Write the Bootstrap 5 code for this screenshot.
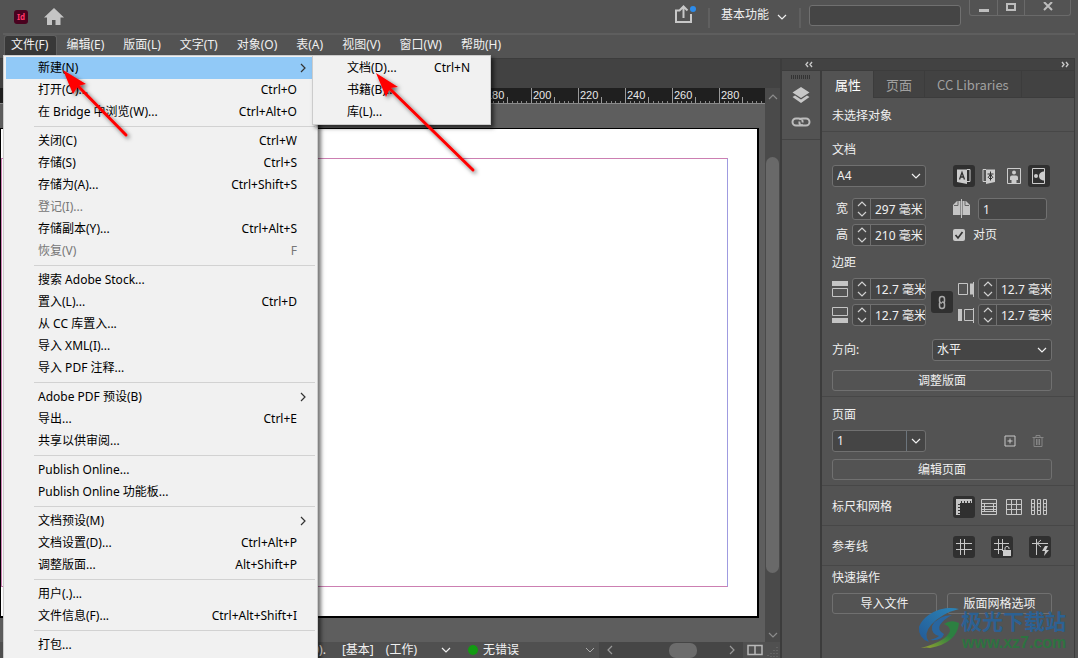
<!DOCTYPE html>
<html lang="zh-CN">
<head>
<meta charset="utf-8">
<meta name="viewport" content="width=device-width, initial-scale=1">
<title>InDesign</title>
<link href="https://cdn.jsdelivr.net/npm/bootstrap@5.3.0/dist/css/bootstrap.min.css" rel="stylesheet">
<style>
:root{--base:#535353;--deep:#424242;--line:#3c3c3c;--field:#454545;--edge:#707070;--txt:#f0f0f0}
body{font:12px/16px "Noto Sans","Noto Sans CJK SC",sans-serif;background:var(--base);color:var(--txt);height:100vh;overflow:hidden}
svg{display:block;flex:none}
button,input,select{font:inherit;color:inherit}
button{background:none;border:0;padding:0}
.title-bar{height:33px;padding-left:14px;padding-right:7px}
.id-logo{width:14px;height:14px;border-radius:3px;background:#49021f;color:#ff3366;font:bold 8px/14px "Noto Sans",sans-serif;text-align:center}
.v-sep{width:2px;height:20px;background:#606060}
.share-btn{margin-right:11px}
.space-btn{margin:3px 12px 0 3px}
.search-box{width:152px;height:21px;margin-top:1px;background:var(--field);border:1px solid var(--edge);border-radius:3px}
.win-ctl{height:16px;border:1px solid #6a6a6a;border-top:0;border-radius:0 0 3px 3px}
.win-ctl button{width:27px;height:15px;color:#bdbdbd}
.win-ctl button+button{border-left:1px solid #6a6a6a}
.win-ctl button:last-child{width:46px}
.menu-bar{height:25px;border-top:2px solid #5e5e5e;margin:0 3px;padding-left:1px}
.menu-bar .nav-link{color:var(--txt);padding:2px 8px;height:20px;line-height:16px;margin-right:3px}
.menu-bar .nav-link.open{background:#383838;border:1px solid #606060;border-bottom:0;border-radius:3px 3px 0 0;padding:1px 8px 2px 6px;margin-right:1px}
.app-menu{position:absolute;background:#f1f1f1;border:1px solid #ccc;border-radius:0;padding:2px;font-size:12px;color:#000;box-shadow:3px 3px 4px rgba(0,0,0,.55);margin:0;min-width:0}
.file-menu{top:20px;left:-1px;width:315px;padding-top:1px}
.new-menu{top:-2px;left:306px;width:179px;padding:1px 2px}
.app-menu .dropdown-item{display:flex;justify-content:space-between;align-items:center;height:22px;padding:0 18px 0 32px;color:#000;line-height:20px}
.file-menu>li>.dropdown-item{margin-right:3px;width:auto;padding-right:15px}
.app-menu .dropdown-item.disabled{color:#777}
.app-menu .dropdown-item.hot{background:#91c9f7}
.app-menu .dropdown-item svg{margin-right:-9px;color:#333}
.file-menu .dropdown-divider{height:1px;border-top:1px solid #d2d2d2;margin:3px 0 3px 28px;opacity:1}
.work{margin-right:3px;min-height:0}
.doc-tabs{height:30px;background:var(--deep);border-top:1px solid var(--line)}
.ruler{height:16px;background:#1f1f1f;border-bottom:1px solid #8a8a8a;overflow:hidden;color:#e8e8e8}
.r-cell{width:47px;height:15px;flex:none;position:relative;font:11px/15px "Liberation Sans",sans-serif;padding-left:2px}
.r-cell:last-child{width:46px;overflow:hidden}
.r-cell svg{position:absolute;left:0;bottom:0}
.canvas{background:#5e5e5e;padding:24px 6px 24px 0;min-height:0}
.artboard{background:#fff;border:1px solid #000;border-right-width:2px;border-bottom-width:2px;padding:29px 29px 29px 0}
.margins{border:1px solid #cc7fb2;border-right-color:#9f9be0}
.v-scroll{width:15px;background:#4a4a4a;padding:6px 0 4px;color:#8c8c8c}
.v-scroll .thumb{width:13px;border-radius:7px;background:#696969;margin:57px 0 59px}
.status{height:16px;background:#505050}
.h-scroll{width:144px;background:#464646;color:#999}
.h-scroll .thumb{width:28px;height:15px;border-radius:7px;background:#6c6c6c}
.side{width:295px;border-left:2px solid var(--line);border-right:1px solid var(--line)}
.side-head{height:13px;padding:0 2px 0 22px;background:var(--deep);border-top:1px solid var(--line);border-bottom:1px solid var(--line)}
.dock{width:40px;border-right:2px solid var(--line)}
.tool-rail{border-bottom:1px solid #444;height:69px;padding-top:4px}
.link-btn{margin-top:13px}
.prop-tabs{height:27px;background:var(--deep);border-bottom:1px solid var(--line)}
.prop-tabs button{height:27px;padding:0 12px;font:13px/26px "Noto Sans CJK SC",sans-serif;color:#a0a0a0;border-right:1px solid var(--line)}
.prop-tabs button.on{background:var(--base);color:#fff;padding-left:13px}
.sect{border-bottom:1px solid #474747;padding:10px 22px 5px 10px}
.sect.tools{padding-bottom:7px}
.sect.quick{padding-top:4px;border:0}
.sect-label{margin-bottom:7px}
.fld{background:var(--field);border:1px solid var(--edge);border-radius:3px;height:22px;overflow:hidden;display:flex;align-items:center}
.fld select,.fld input{background:transparent;border:0;outline:0;padding:0 4px;min-width:0;width:100%;height:20px;appearance:none;border-radius:0}
.fld .unit{padding-right:0}
.fld.pages{width:69px}
.fld.dir{width:120px}
.spin button{width:18px;height:20px;border-right:1px solid var(--edge);flex:none}
.spin{width:74px}
.row-l{width:94px}
.size-rows{gap:27px;margin:11px 0 9px}
.dir-row{margin:13px 0 9px}
.facing{height:22px}
.page-row{margin-bottom:7px}
.out{border:1px solid var(--edge);border-radius:3px;height:21px;line-height:19px}
.pair{gap:10px}
.ib-set{margin-right:2px;gap:3px}
.ib-set.wide{gap:16px;margin-right:1px}
.ib{width:22px;height:22px;border-radius:3px;display:grid;place-items:center;color:#c8c8c8}
.ib.on{background:#303030}
.chk{appearance:none;width:12px;height:12px;border-radius:2px;margin:0;background:#c8c8c8 url("data:image/svg+xml,%3Csvg xmlns='http://www.w3.org/2000/svg' viewBox='0 0 12 12'%3E%3Cpath d='M2.5 6l2.500 3 4.500-6' fill='none' stroke='%23333' stroke-width='1.700'/%3E%3C/svg%3E")}
.over{position:absolute;pointer-events:none;z-index:2000}
.mark-logo{right:8px;bottom:3px;width:152px;height:50px}
.wm-a{font:bold 21px "Noto Sans CJK SC",sans-serif;fill:#2c6193}
.wm-b{font:bold 16px "Liberation Sans",sans-serif;fill:#2d7340}
</style>
</head>
<body class="d-flex flex-column">
<svg width="0" height="0" class="position-absolute">
<symbol id="dn" viewBox="0 0 10 6"><path d="M1 1l4 4 4-4" fill="none" stroke="currentColor" stroke-width="1.200"/></symbol>
<symbol id="up" viewBox="0 0 10 6"><path d="M1 5l4-4 4 4" fill="none" stroke="currentColor" stroke-width="1.200"/></symbol>
<symbol id="rt" viewBox="0 0 6 10"><path d="M1 1l4 4-4 4" fill="none" stroke="currentColor" stroke-width="1.200"/></symbol>
<symbol id="lf" viewBox="0 0 6 10"><path d="M5 1L1 5l4 4" fill="none" stroke="currentColor" stroke-width="1.200"/></symbol>
<symbol id="ud" viewBox="0 0 10 16"><path d="M1 5l4-4 4 4M1 11l4 4 4-4" fill="none" stroke="#d0d0d0" stroke-width="1.200"/></symbol>
<symbol id="ticks" viewBox="0 0 47 15"><path d="M.5 0v15M23.500 9v6" stroke="#999"/><path d="M5.500 13v2M9.500 13v2M14.500 13v2M19.500 13v2M28.500 13v2M33.500 13v2M37.500 13v2M42.500 13v2" stroke="#888"/></symbol>
</svg>

<header class="title-bar d-flex align-items-start flex-shrink-0">
  <div class="d-flex align-items-center gap-3 h-100">
    <div class="id-logo">Id</div>
    <svg width="20" height="17" viewBox="0 0 20 17"><path fill="#c4c4c4" d="M10 0L0 9.500h3V17h5v-5h3.500v5h5V9.500H20z"/></svg>
  </div>
  <div class="d-flex align-items-start ms-auto pt-1">
    <button aria-label="共享" class="share-btn"><svg width="23" height="20" viewBox="0 0 23 20"><path d="M6 6.500H2V18h15V10M9.500 14V4M5.500 6.500l4-4 4 4" fill="none" stroke="#c8c8c8" stroke-width="2"/><circle cx="19" cy="5" r="3" fill="#2d8ceb"/></svg></button>
    <div class="v-sep mt-1 me-2"></div>
    <button class="space-btn d-flex align-items-center gap-2"><span>基本功能</span><svg class="mt-1" width="10" height="6"><use href="#dn"/></svg></button>
    <div class="v-sep mt-1 me-2"></div>
    <input class="search-box me-2" aria-label="搜索">
  </div>
  <div class="win-ctl d-flex">
    <button aria-label="最小化"><svg class="mx-auto" width="12" height="12"><path d="M1 8.500h10" stroke="currentColor" stroke-width="3"/></svg></button>
    <button aria-label="最大化"><svg class="mx-auto" width="12" height="12"><path d="M2 2h8v6H2z" fill="none" stroke="currentColor" stroke-width="2"/></svg></button>
    <button aria-label="关闭"><svg class="mx-auto" width="12" height="12"><path d="M2 0l8 8M10 0l-8 8" stroke="currentColor" stroke-width="2"/></svg></button>
  </div>
</header>

<nav class="menu-bar flex-shrink-0">
  <ul class="nav flex-nowrap">
    <li class="nav-item position-relative"><a class="nav-link open" href="#">文件(F)</a>
      <ul class="app-menu file-menu dropdown-menu show">
        <li class="position-relative"><a class="dropdown-item hot" href="#">新建(N)<svg width="6" height="10"><use href="#rt"/></svg></a>
          <ul class="app-menu new-menu dropdown-menu show">
            <li><a class="dropdown-item" href="#">文档(D)...<span>Ctrl+N</span></a></li>
            <li><a class="dropdown-item" href="#">书籍(B)...</a></li>
            <li><a class="dropdown-item" href="#">库(L)...</a></li>
          </ul></li>
        <li><a class="dropdown-item" href="#">打开(O)...<span>Ctrl+O</span></a></li>
        <li><a class="dropdown-item" href="#">在 Bridge 中浏览(W)...<span>Ctrl+Alt+O</span></a></li>
        <li><hr class="dropdown-divider"></li>
        <li><a class="dropdown-item" href="#">关闭(C)<span>Ctrl+W</span></a></li>
        <li><a class="dropdown-item" href="#">存储(S)<span>Ctrl+S</span></a></li>
        <li><a class="dropdown-item" href="#">存储为(A)...<span>Ctrl+Shift+S</span></a></li>
        <li><a class="dropdown-item disabled" href="#">登记(I)...</a></li>
        <li><a class="dropdown-item" href="#">存储副本(Y)...<span>Ctrl+Alt+S</span></a></li>
        <li><a class="dropdown-item disabled" href="#">恢复(V)<span>F</span></a></li>
        <li><hr class="dropdown-divider"></li>
        <li><a class="dropdown-item" href="#">搜索 Adobe Stock...</a></li>
        <li><a class="dropdown-item" href="#">置入(L)...<span>Ctrl+D</span></a></li>
        <li><a class="dropdown-item" href="#">从 CC 库置入...</a></li>
        <li><a class="dropdown-item" href="#">导入 XML(I)...</a></li>
        <li><a class="dropdown-item" href="#">导入 PDF 注释...</a></li>
        <li><hr class="dropdown-divider"></li>
        <li><a class="dropdown-item" href="#">Adobe PDF 预设(B)<svg width="6" height="10"><use href="#rt"/></svg></a></li>
        <li><a class="dropdown-item" href="#">导出...<span>Ctrl+E</span></a></li>
        <li><a class="dropdown-item" href="#">共享以供审阅...</a></li>
        <li><hr class="dropdown-divider"></li>
        <li><a class="dropdown-item" href="#">Publish Online...</a></li>
        <li><a class="dropdown-item" href="#">Publish Online 功能板...</a></li>
        <li><hr class="dropdown-divider"></li>
        <li><a class="dropdown-item" href="#">文档预设(M)<svg width="6" height="10"><use href="#rt"/></svg></a></li>
        <li><a class="dropdown-item" href="#">文档设置(D)...<span>Ctrl+Alt+P</span></a></li>
        <li><a class="dropdown-item" href="#">调整版面...<span>Alt+Shift+P</span></a></li>
        <li><hr class="dropdown-divider"></li>
        <li><a class="dropdown-item" href="#">用户(.)...</a></li>
        <li><a class="dropdown-item" href="#">文件信息(F)...<span>Ctrl+Alt+Shift+I</span></a></li>
        <li><hr class="dropdown-divider"></li>
        <li><a class="dropdown-item" href="#">打包...</a></li>
      </ul>
    </li>
    <li><a class="nav-link" href="#">编辑(E)</a></li>
    <li><a class="nav-link" href="#">版面(L)</a></li>
    <li><a class="nav-link" href="#">文字(T)</a></li>
    <li><a class="nav-link" href="#">对象(O)</a></li>
    <li><a class="nav-link" href="#">表(A)</a></li>
    <li><a class="nav-link" href="#">视图(V)</a></li>
    <li><a class="nav-link" href="#">窗口(W)</a></li>
    <li><a class="nav-link" href="#">帮助(H)</a></li>
  </ul>
</nav>

<div class="work d-flex flex-fill">
  <main class="d-flex flex-column flex-fill overflow-hidden">
    <div class="doc-tabs flex-shrink-0"></div>
    <div class="d-flex flex-fill overflow-hidden">
      <div class="d-flex flex-column flex-fill overflow-hidden">
        <div class="ruler d-flex justify-content-end flex-shrink-0">
          <div class="r-cell"><svg width="47" height="15"><use href="#ticks"/></svg>180</div>
          <div class="r-cell"><svg width="47" height="15"><use href="#ticks"/></svg>200</div>
          <div class="r-cell"><svg width="47" height="15"><use href="#ticks"/></svg>220</div>
          <div class="r-cell"><svg width="47" height="15"><use href="#ticks"/></svg>240</div>
          <div class="r-cell"><svg width="47" height="15"><use href="#ticks"/></svg>260</div>
          <div class="r-cell"><svg width="47" height="15"><use href="#ticks"/></svg>280</div>
        </div>
        <div class="canvas d-flex flex-fill"><div class="artboard d-flex flex-fill"><div class="margins flex-fill"></div></div></div>
      </div>
      <div class="v-scroll d-flex flex-column align-items-center">
        <svg width="10" height="6"><use href="#up"/></svg>
        <div class="thumb flex-fill"></div>
        <svg width="10" height="6"><use href="#dn"/></svg>
      </div>
    </div>
    <footer class="status d-flex justify-content-end align-items-center flex-shrink-0">
      <span class="me-3">0).</span>
      <span class="me-2">[基本]</span><span class="ms-1">(工作)</span>
      <svg class="ms-4 me-3" width="10" height="6"><use href="#dn"/></svg>
      <svg class="me-1" width="12" height="12"><circle cx="6" cy="6" r="5" fill="#129a12"/></svg>
      <span>无错误</span>
      <svg class="ms-5 me-1" width="28" height="6" viewBox="-18 0 28 6"><path d="M1 1l4 4 4-4" fill="none" stroke="#aaa"/></svg>
      <div class="h-scroll d-flex align-items-center h-100 px-2">
        <svg width="6" height="10"><use href="#lf"/></svg><div class="thumb ms-auto me-4"></div><svg class="ms-2" width="6" height="10"><use href="#rt"/></svg>
      </div>
      <svg width="37" height="16"><path d="M5 3.500h14v9H5zM12 3v10" fill="none" stroke="#b8b8b8" stroke-width="1.500"/><path d="M34 5v10M31 8v7M28 11v4M25 13v2" stroke="#777" stroke-dasharray="1 2"/></svg>
    </footer>
  </main>

  <aside class="side d-flex flex-column flex-shrink-0">
    <div class="side-head d-flex justify-content-between align-items-center flex-shrink-0">
      <svg width="10" height="7"><path d="M4 1L2 3.500 4 6M8 1L6 3.500 8 6" fill="none" stroke="#c8c8c8" stroke-width="1.400"/></svg>
      <svg width="12" height="7"><path d="M2 1l2 2.500L2 6M6 1l2 2.500L6 6" fill="none" stroke="#c8c8c8" stroke-width="1.400"/></svg>
    </div>
    <div class="d-flex flex-fill">
      <div class="dock flex-shrink-0">
        <div class="tool-rail d-flex flex-column align-items-center">
          <svg width="20" height="4"><path d="M0 2h20" stroke="#333" stroke-width="4" stroke-dasharray="1 1"/></svg>
          <button class="mt-2" aria-label="图层"><svg width="18" height="17" viewBox="0 0 18 17"><path fill="#c8c8c8" d="M9 0l8.500 5.500L9 11 .5 5.500zM.5 10L3 8.500 9 12.500l6-4 2.500 1.500L9 16z"/></svg></button>
          <button class="link-btn" aria-label="链接"><svg width="20" height="10" viewBox="0 0 20 10"><path d="M12 7.500c-1 1-2 1-4 1H5a3.500 3.500 0 010-7h3c3 0 4 2 3.500 4M8 2.500c1-1 2-1 4-1h3a3.500 3.500 0 010 7h-3c-3 0-4-2-3.500-4" fill="none" stroke="#bdbdbd" stroke-width="2"/></svg></button>
        </div>
      </div>
      <div class="flex-fill">
        <div class="prop-tabs d-flex"><button class="on">属性</button><button>页面</button><button>CC Libraries</button></div>
        <section class="sect tools">未选择对象</section>
        <section class="sect">
          <div class="sect-label" id="h-doc">文档</div>
          <div class="d-flex align-items-center">
            <div class="fld row-l"><select aria-labelledby="h-doc"><option>A4</option></select><svg class="me-1" width="10" height="6"><use href="#dn"/></svg></div>
            <div class="ib-set d-flex ms-auto">
              <button class="ib on" aria-label="横排"><svg width="14" height="16"><path d="M0 1.500h10V16L0 14z" fill="#ccc"/><path d="M10 1.500h3v12h-3" fill="none" stroke="#ccc"/><path d="M2.500 11.500L5 4.500l2.500 7M3.500 9h3" fill="none" stroke="#333" stroke-width="1.300"/></svg></button>
              <button class="ib" aria-label="直排"><svg width="14" height="16"><path d="M13 1.500H4V16l9-2z" fill="#ccc"/><path d="M4 1.500H1v12h3" fill="none" stroke="#ccc"/><path d="M5.500 6h6M8.500 3.500v9M8.500 6L6 10M8.500 6l2.500 4M7 10.500h3" fill="none" stroke="#333"/></svg></button>
              <button class="ib" aria-label="纵向"><svg width="14" height="16"><path d="M.5.5h13v15H.5z" fill="none" stroke="#ccc"/><circle cx="7" cy="4.500" r="2" fill="#ccc"/><path d="M3 12V9.500q0-2 2-2h4q2 0 2 2V12H9.500v4h-5v-4z" fill="#ccc"/></svg></button>
              <button class="ib on" aria-label="横向"><svg width="14" height="16"><path d="M.5.5h12v15H.5z" fill="none" stroke="#ccc"/><circle cx="4" cy="8" r="2" fill="#ccc"/><path d="M13 3.500h-2q-4 1-4 4.500t4 4.500h2z" fill="#ccc"/></svg></button>
            </div>
          </div>
          <div class="size-rows d-flex">
            <div class="d-flex flex-column gap-1 row-l">
              <div class="d-flex justify-content-end align-items-center"><label for="w">宽</label><div class="fld spin ms-1"><button aria-label="调整宽"><svg class="mx-auto" width="10" height="16"><use href="#ud"/></svg></button><input class="unit" id="w" value="297 毫米"></div></div>
              <div class="d-flex justify-content-end align-items-center"><label for="h">高</label><div class="fld spin ms-1"><button aria-label="调整高"><svg class="mx-auto" width="10" height="16"><use href="#ud"/></svg></button><input class="unit" id="h" value="210 毫米"></div></div>
            </div>
            <div class="d-flex flex-column gap-1">
              <div class="d-flex align-items-center"><svg width="17" height="20"><path d="M0 6l4-4h3.500v14H0zM9.500 2H13l4 4v10H9.500z" fill="#c4c4c4"/><path d="M8.500 0v19" stroke="#c4c4c4"/><path d="M1 6.500h4V2M12 2v4.500h4" fill="none" stroke="#666"/></svg><div class="fld pages ms-2"><input aria-label="页数" value="1"></div></div>
              <div class="facing d-flex align-items-center gap-2"><input type="checkbox" class="chk" id="fp" checked><label for="fp">对页</label></div>
            </div>
          </div>
          <div class="sect-label">边距</div>
          <div class="d-flex align-items-center justify-content-between">
            <div class="d-flex flex-column gap-1 row-l">
              <div class="d-flex justify-content-between align-items-center"><svg width="17" height="17"><path d="M0 0h16v5H0z" fill="#c4c4c4"/><path d="M.5 7.500h15v8H.5z" fill="none" stroke="#c4c4c4"/></svg><div class="fld spin"><button aria-label="调整上"><svg class="mx-auto" width="10" height="16"><use href="#ud"/></svg></button><input class="unit" aria-label="上" value="12.7 毫米"></div></div>
              <div class="d-flex justify-content-between align-items-center"><svg width="17" height="17"><path d="M0 11h16v5H0z" fill="#c4c4c4"/><path d="M.5.5h15v8H.5z" fill="none" stroke="#c4c4c4"/></svg><div class="fld spin"><button aria-label="调整下"><svg class="mx-auto" width="10" height="16"><use href="#ud"/></svg></button><input class="unit" aria-label="下" value="12.7 毫米"></div></div>
            </div>
            <button class="ib on" aria-label="统一边距"><svg width="8" height="15"><path d="M5.500 8.500q1-1 1-2V4q0-2.500-2.500-2.500T1.500 4v2q0 2 2.500 2M2.500 6.500q-1 1-1 2V11q0 2.500 2.500 2.500T6.500 11V9Q6.500 7 4 7" fill="none" stroke="#aaa" stroke-width="1.500"/></svg></button>
            <div class="d-flex flex-column gap-1 row-l">
              <div class="d-flex justify-content-between align-items-center"><svg width="17" height="15"><path d="M.5 1.500h9v11h-9z" fill="none" stroke="#c4c4c4"/><path d="M12 1.500h3v11h-3z" fill="#c4c4c4"/><path d="M15.500 0v15" stroke="#c4c4c4"/></svg><div class="fld spin"><button aria-label="调整内"><svg class="mx-auto" width="10" height="16"><use href="#ud"/></svg></button><input class="unit" aria-label="内" value="12.7 毫米"></div></div>
              <div class="d-flex justify-content-between align-items-center"><svg width="17" height="15"><path d="M6.500 1.500h9v11h-9z" fill="none" stroke="#c4c4c4"/><path d="M0 1h4v12H0z" fill="#c4c4c4"/><path d="M15.500 0v15" stroke="#c4c4c4"/></svg><div class="fld spin"><button aria-label="调整外"><svg class="mx-auto" width="10" height="16"><use href="#ud"/></svg></button><input class="unit" aria-label="外" value="12.7 毫米"></div></div>
            </div>
          </div>
          <div class="dir-row d-flex align-items-center justify-content-between"><label for="dir">方向:</label><div class="fld dir"><select id="dir"><option>水平</option></select><svg class="me-1" width="10" height="6"><use href="#dn"/></svg></div></div>
          <button class="out w-100 d-block">调整版面</button>
        </section>
        <section class="sect">
          <div class="sect-label" id="h-pg">页面</div>
          <div class="page-row d-flex align-items-center"><div class="fld row-l"><select aria-labelledby="h-pg"><option>1</option></select><span class="border-start border-secondary h-100 d-flex align-items-center px-1"><svg width="10" height="6"><use href="#dn"/></svg></span></div>
            <button class="ms-auto me-3" aria-label="添加页面"><svg width="12" height="12"><path d="M1 1h10v10H1zM6 3.500v5M3.500 6h5" fill="none" stroke="#c8c8c8"/></svg></button>
            <button class="me-2" aria-label="删除页面"><svg width="12" height="12"><path d="M.5 2.500h11M4 2V.5h4V2M2 3v8.500h8V3M4.500 4v6M6 4v6M7.500 4v6" fill="none" stroke="#858585"/></svg></button></div>
          <button class="out w-100 d-block">编辑页面</button>
        </section>
        <section class="sect tools d-flex justify-content-between align-items-center"><span>标尺和网格</span>
          <div class="ib-set d-flex">
            <button class="ib on" aria-label="标尺"><svg width="16" height="16"><path d="M0 0h16v4H4v12H0z" fill="#c4c4c4"/><path d="M5 3h10" stroke="#333" stroke-dasharray="1 2" stroke-width="2"/><path d="M3 5v10" stroke="#333" stroke-dasharray="1 2" stroke-width="2"/></svg></button>
            <button class="ib" aria-label="基线网格"><svg width="16" height="16"><path d="M.5.5h15v15H.5zM0 4.500h16M0 7.500h16M0 10.500h16M0 12.500h16M3.500 4v9M12.500 4v9" fill="none" stroke="#c8c8c8"/></svg></button>
            <button class="ib" aria-label="文档网格"><svg width="16" height="16"><path d="M.5.5h15v15H.5zM5.500 0v16M10.500 0v16M0 5.500h16M0 10.500h16" fill="none" stroke="#c8c8c8"/></svg></button>
            <button class="ib" aria-label="版面网格"><svg width="17" height="16"><path d="M.5.5h3v15h-3zM6.500.5h3v15h-3zM12.500.5h3v15h-3zM0 4.500h4M0 8h4M0 11.500h4M6 4.500h4M6 8h4M6 11.500h4M12 4.500h4M12 8h4M12 11.500h4" fill="none" stroke="#c8c8c8"/></svg></button>
          </div></section>
        <section class="sect tools d-flex justify-content-between align-items-center"><span>参考线</span>
          <div class="ib-set wide d-flex">
            <button class="ib on" aria-label="显示参考线"><svg width="18" height="18"><path d="M1 5.500h16M1 11.500h16M5.500 1v16M9.500 1v16" stroke="#c8c8c8"/></svg></button>
            <button class="ib on" aria-label="锁定参考线"><svg width="18" height="18"><path d="M1 5.500h15M1 11.500h9M5.500 1v15M9.500 1v12" stroke="#c8c8c8"/><path d="M10 12h8v6h-8z" fill="#ccc"/><path d="M12 12V9.500q2-2.500 4 0V11" fill="none" stroke="#ccc"/></svg></button>
            <button class="ib on" aria-label="智能参考线"><svg width="18" height="18"><path d="M1 5.500h16M5.500 1v16M10 2L6 5.500 10 9" fill="none" stroke="#c8c8c8"/><path d="M14 8l-3 5h3l-1 5 5-6h-3l2-4z" fill="#ccc"/></svg></button>
          </div></section>
        <section class="sect quick">
          <div class="sect-label">快速操作</div>
          <div class="pair d-flex"><button class="out flex-fill w-50">导入文件</button><button class="out flex-fill w-50">版面网格选项</button></div>
        </section>
      </div>
    </div>
  </aside>
</div>

<!-- pointer arrows over the menus -->
<svg class="over top-0 start-0" width="500" height="190">
  <defs><filter id="sh" x="-20%" y="-20%" width="150%" height="150%"><feDropShadow dx="2" dy="2" stdDeviation="2" flood-opacity=".6"/></filter></defs>
  <g fill="#f00" stroke="#f00" filter="url(#sh)">
    <path stroke="none" d="M63 70l23 14-8 2-5 8z"/><path d="M78 86l48 49" stroke-width="3" stroke-linecap="round"/>
    <path stroke="none" d="M376 73l22 14-8 1-4 9z"/><path d="M389 88l84 82" stroke-width="3" stroke-linecap="round"/>
  </g>
</svg>
<!-- site badge -->
<svg class="over mark-logo" viewBox="0 0 152 50">
  <defs><linearGradient id="gb" x1="0" y1="1" x2="1" y2="0"><stop stop-color="#245a96"/><stop offset="1" stop-color="#2b85b8"/></linearGradient><linearGradient id="gg" x1="0" y1="1" x2="1" y2="0"><stop stop-color="#9aa52e"/><stop offset=".6" stop-color="#2c8041"/></linearGradient></defs>
  <path fill="url(#gb)" d="M41 4C26 0 6 8 1 22q-1 11 10 15-6-8 2-17Q24 8 41 4z"/>
  <path fill="#2866a0" d="M34 10Q19 11 14 21q-1 8 7 10-2 2-9 4 12 1 14-6-7-4-4-9 4-6 12-10z"/>
  <path fill="url(#gg)" d="M41 18q-8-4-15 1 6 2 6 7-3 10-29 17 6-1 9 0 27-5 29-25z"/>
  <text class="wm-a" x="43" y="24">极光下载站</text>
  <text class="wm-b" x="44" y="43">www.xz7.com</text>
</svg>
<script src="https://cdn.jsdelivr.net/npm/bootstrap@5.3.0/dist/js/bootstrap.bundle.min.js"></script>
</body>
</html>
